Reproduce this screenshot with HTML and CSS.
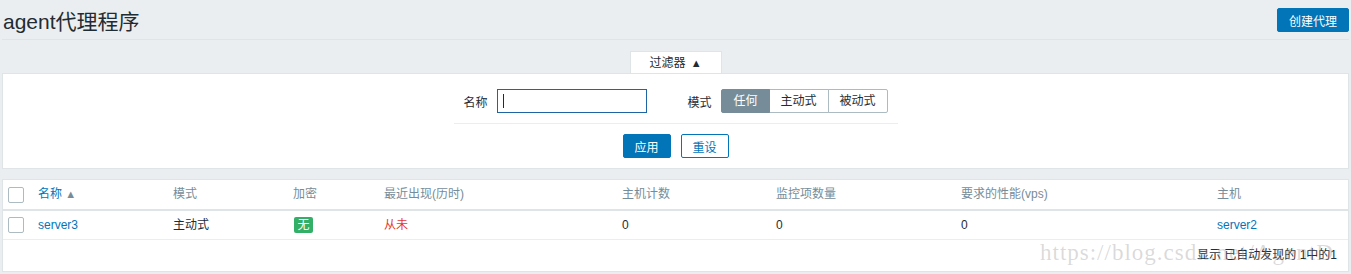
FILE: index.html
```html
<!DOCTYPE html>
<html>
<head>
  <meta charset="utf-8">
  <link rel="stylesheet" href="styles.css">
</head>
<body>
  <div class="page">
    <header class="page-header">
      <h1>agent代理程序</h1>
      <button class="btn">创建代理</button>
    </header>

    <div class="filter-tabs">
      <span class="filter-tab">过滤器 <span class="tab-arrow">▲</span></span>
    </div>
    <div class="filter-panel">
      <div class="filter-row">
        <label class="filter-label">名称</label>
        <span class="input-wrap"><input class="input" type="text"></span>
        <label class="filter-label mode-label">模式</label>
        <div class="segmented">
          <span class="seg seg-on">任何</span>
          <span class="seg">主动式</span>
          <span class="seg">被动式</span>
        </div>
      </div>
      <div class="filter-buttons">
        <button class="btn">应用</button>
        <button class="btn btn-alt">重设</button>
      </div>
    </div>

    <div class="list">
      <table>
        <tr>
          <th class="col-check"><span class="checkbox"></span></th>
          <th class="col-name"><a class="link">名称</a> <span class="sort-arrow">▲</span></th>
          <th class="col-mode">模式</th>
          <th class="col-enc">加密</th>
          <th class="col-seen">最近出现(历时)</th>
          <th class="col-hosts">主机计数</th>
          <th class="col-items">监控项数量</th>
          <th class="col-vps">要求的性能(vps)</th>
          <th>主机</th>
        </tr>
        <tr>
          <td><span class="checkbox"></span></td>
          <td><a class="link">server3</a></td>
          <td>主动式</td>
          <td><span class="badge">无</span></td>
          <td class="red">从未</td>
          <td>0</td>
          <td>0</td>
          <td>0</td>
          <td><a class="link">server2</a></td>
        </tr>
      </table>
      <div class="list-footer">显示 已自动发现的 1中的1</div>
    </div>

    <div class="watermark">https://blog.csdn.net/AgentD</div>
  </div>
</body>
</html>
```

FILE: styles.css
```css
body {
  margin: 0;
  background-color: #ebeef0;
  font-family: "Liberation Sans", Arial, "Noto Sans CJK SC", sans-serif;
  font-size: 12px;
  color: #1f2c33;
}
.page {
  position: relative;
  padding: 0 2px;
  height: 274px;
  overflow: hidden;
}
.page-header {
  display: flex;
  align-items: center;
  justify-content: space-between;
  height: 39px;
  border-bottom: 1px solid #dfe4e7;
}
h1 {
  margin: 0 0 0 1px;
  font-size: 21px;
  font-weight: normal;
  color: #1f2c33;
}
.btn {
  height: 24px;
  padding: 0 11px;
  border: 1px solid #0275b8;
  border-radius: 2px;
  background-color: #0275b8;
  color: white;
  font-family: inherit;
  font-size: 12px;
}
.page-header .btn {
  margin-top: 1px;
  width: 72px;
}
.btn-alt {
  background-color: white;
  color: #0275b8;
}

.filter-tabs {
  display: flex;
  justify-content: center;
  margin-top: 11px;
}
.filter-tab {
  width: 92px;
  height: 22px;
  line-height: 22px;
  text-align: center;
  background-color: white;
  border: 1px solid #dfe4e7;
  border-bottom: none;
  box-sizing: border-box;
  color: #1f2c33;
}
.tab-arrow {
  font-size: 11px;
  margin-left: 2px;
}
.filter-panel {
  background-color: white;
  border: 1px solid #dfe4e7;
  padding: 15px 0 10px;
}
.filter-row {
  display: flex;
  align-items: center;
  justify-content: center;
  width: 444px;
  margin: 0 auto;
  padding-bottom: 10px;
  border-bottom: 1px solid #ebeef0;
}
.filter-label {
  margin-right: 10px;
}
.mode-label {
  margin-left: 40px;
}
.input-wrap {
  position: relative;
  display: block;
}
.input-wrap::after {
  content: "";
  position: absolute;
  left: 6px;
  top: 5px;
  width: 1px;
  height: 14px;
  background-color: #1f2c33;
}
.input {
  display: block;
  width: 150px;
  height: 24px;
  box-sizing: border-box;
  border: 1px solid #1f65a6;
  outline: none;
  padding: 0 5px;
  font-family: inherit;
  font-size: 12px;
}
.segmented {
  display: flex;
}
.seg {
  height: 24px;
  line-height: 22px;
  box-sizing: border-box;
  padding: 0 11px;
  border: 1px solid #acbbc2;
  margin-left: -1px;
  background-color: white;
}
.seg:first-child {
  margin-left: 0;
  border-radius: 2px 0 0 2px;
}
.seg:last-child {
  border-radius: 0 2px 2px 0;
}
.seg-on {
  background-color: #768d99;
  border-color: #768d99;
  color: white;
  position: relative;
}
.filter-buttons {
  display: flex;
  justify-content: center;
  gap: 10px;
  margin-top: 10px;
}
.filter-buttons .btn {
  width: 48px;
  padding: 0;
}

.list {
  margin-top: 10px;
  background-color: white;
  border: 1px solid #dfe4e7;
}
table {
  width: 100%;
  border-collapse: collapse;
  table-layout: fixed;
}
th {
  text-align: left;
  font-weight: normal;
  color: #768d99;
  padding: 6px 5px;
  line-height: 17px;
  border-bottom: 2px solid #dfe4e7;
  white-space: nowrap;
}
td {
  padding: 6px 5px;
  line-height: 16px;
  border-bottom: 1px solid #ebeef0;
  white-space: nowrap;
}
th span.checkbox,
td span.checkbox {
  vertical-align: middle;
}
.col-check { width: 20px; }
.col-name { width: 125px; }
.col-mode { width: 110px; }
.col-enc { width: 81px; }
.col-seen { width: 228px; }
.col-hosts { width: 144px; }
.col-items { width: 175px; }
.col-vps { width: 246px; }
.checkbox {
  display: block;
  width: 16px;
  height: 16px;
  box-sizing: border-box;
  border: 1px solid #acbbc2;
  border-radius: 2px;
  background-color: white;
}
.link {
  color: #0275b8;
  text-decoration: none;
}
.sort-arrow {
  font-size: 11px;
  color: #768d99;
}
.badge {
  display: inline-block;
  width: 19px;
  height: 16px;
  line-height: 16px;
  margin-left: 1px;
  text-align: center;
  background-color: #34af67;
  color: white;
  border-radius: 2px;
}
.red {
  color: #e33734;
}
.list-footer {
  text-align: right;
  padding: 7px 11px;
  line-height: 17px;
}
.watermark {
  position: absolute;
  left: 1040px;
  top: 240px;
  font-family: "Liberation Serif", serif;
  font-size: 23px;
  letter-spacing: 1px;
  color: rgba(150, 150, 150, 0.35);
  white-space: nowrap;
  pointer-events: none;
}
```
